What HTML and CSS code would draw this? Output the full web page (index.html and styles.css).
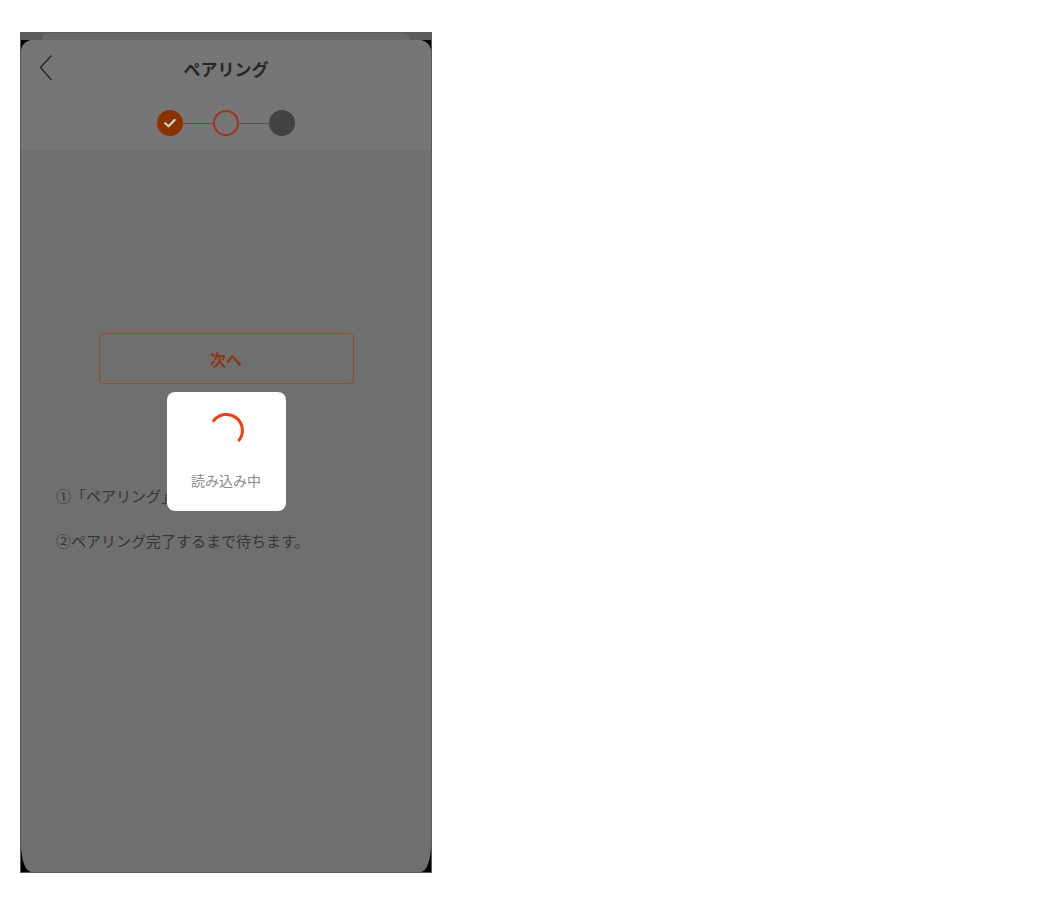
FILE: index.html
```html
<!DOCTYPE html>
<html lang="ja">
<head>
<meta charset="utf-8">
<title>ペアリング</title>
<link rel="stylesheet" href="styles.css">
</head>
<body>
<div class="frame">
  <div class="behind"><div class="behind-card"></div></div>
  <div class="sheet">
    <div class="header">
      <div class="title-row">
        <div class="back">
          <svg width="14" height="26" viewBox="0 0 14 26"><path d="M12 1 L1.5 12.5 L12 24.5" fill="none" stroke="#2b2b2b" stroke-width="1.6" stroke-linecap="round" stroke-linejoin="round"/></svg>
        </div>
        <div class="title">ペアリング</div>
        <div></div>
      </div>
      <div class="steps">
        <div class="step done">
          <svg width="16" height="16" viewBox="0 0 16 16"><path d="M3.2 8.2 L6.6 11.2 L12.6 5" fill="none" stroke="#d2d2d2" stroke-width="2.2" stroke-linecap="round" stroke-linejoin="round"/></svg>
        </div>
        <div class="link active"></div>
        <div class="step current"></div>
        <div class="link"></div>
        <div class="step todo"></div>
      </div>
    </div>
    <div class="body">
      <div class="btn">次へ</div>
      <p class="note first">①「ペアリング」をタップします。</p>
      <p class="note">②ペアリング完了するまで待ちます。</p>
    </div>
  </div>
  <div class="overlay">
    <div class="toast">
      <svg class="spinner" width="40" height="40" viewBox="0 0 40 40"><path d="M7.7 9.7 A16 16 0 0 1 33.1 29.2" fill="none" stroke="#f0410c" stroke-width="3" stroke-linecap="round"/></svg>
      <div class="toast-text">読み込み中</div>
    </div>
  </div>
</div>
</body>
</html>
```
FILE: styles.css
```css
html, body {
  margin: 0;
  padding: 0;
  background: #ffffff;
}
body {
  font-family: "Noto Sans CJK JP", "Noto Sans", sans-serif;
}
.frame {
  position: relative;
  margin: 32px 0 0 20px;
  width: 410px;
  height: 839px;
  border: 1px solid #5a5a5a;
  background: #000000;
  display: flex;
  flex-direction: column;
}
.behind {
  height: 7px;
  background: #5c5c5c;
  display: flex;
  justify-content: center;
  padding: 0 21px;
}
.behind-card {
  flex: 1;
  background: #696969;
  border-radius: 10px 10px 0 0;
}
.sheet {
  flex: 1;
  display: flex;
  flex-direction: column;
  background: #6f6f6f;
  border-radius: 12px 12px 10px 10px / 12px 12px 28px 28px;
  overflow: hidden;
}
.header {
  background: #767676;
  height: 110px;
  display: flex;
  flex-direction: column;
}
.title-row {
  height: 57px;
  display: grid;
  grid-template-columns: 1fr auto 1fr;
  align-items: center;
}
.back {
  padding-left: 18px;
  display: flex;
  align-items: center;
}
.title {
  font-size: 17px;
  font-weight: bold;
  color: #262626;
}
.steps {
  height: 54px;
  display: flex;
  justify-content: center;
  align-items: center;
}
.step {
  width: 26px;
  height: 26px;
  border-radius: 50%;
  box-sizing: border-box;
  display: flex;
  align-items: center;
  justify-content: center;
}
.step.done {
  background: #8a3300;
}
.step.current {
  border: 2px solid #a3321f;
}
.step.todo {
  background: #434343;
}
.link {
  width: 30px;
  height: 1px;
  background: #555555;
}
.link.active {
  background: #8e3c2c;
}
.body {
  flex: 1;
  padding: 183px 35px 0 35px;
  display: flex;
  flex-direction: column;
}
.btn {
  align-self: center;
  width: 253px;
  height: 49px;
  border: 1px solid #9a4a2b;
  border-radius: 4px;
  display: flex;
  align-items: center;
  justify-content: center;
  font-size: 16px;
  font-weight: bold;
  color: #8c3512;
}
.note {
  margin: 0;
  font-size: 15px;
  line-height: 22px;
  color: #363636;
}
.note.first {
  margin-top: 101px;
  margin-bottom: 23px;
}
.overlay {
  position: absolute;
  inset: 0;
  display: flex;
  align-items: center;
  justify-content: center;
}
.toast {
  width: 119px;
  height: 119px;
  margin-top: -2px;
  background: #ffffff;
  border-radius: 8px;
  display: flex;
  flex-direction: column;
  align-items: center;
  box-sizing: border-box;
  padding-top: 19px;
}
.spinner {
  display: block;
}
.toast-text {
  margin-top: 19px;
  font-size: 14px;
  line-height: 20px;
  color: #8a8a8a;
}
```
